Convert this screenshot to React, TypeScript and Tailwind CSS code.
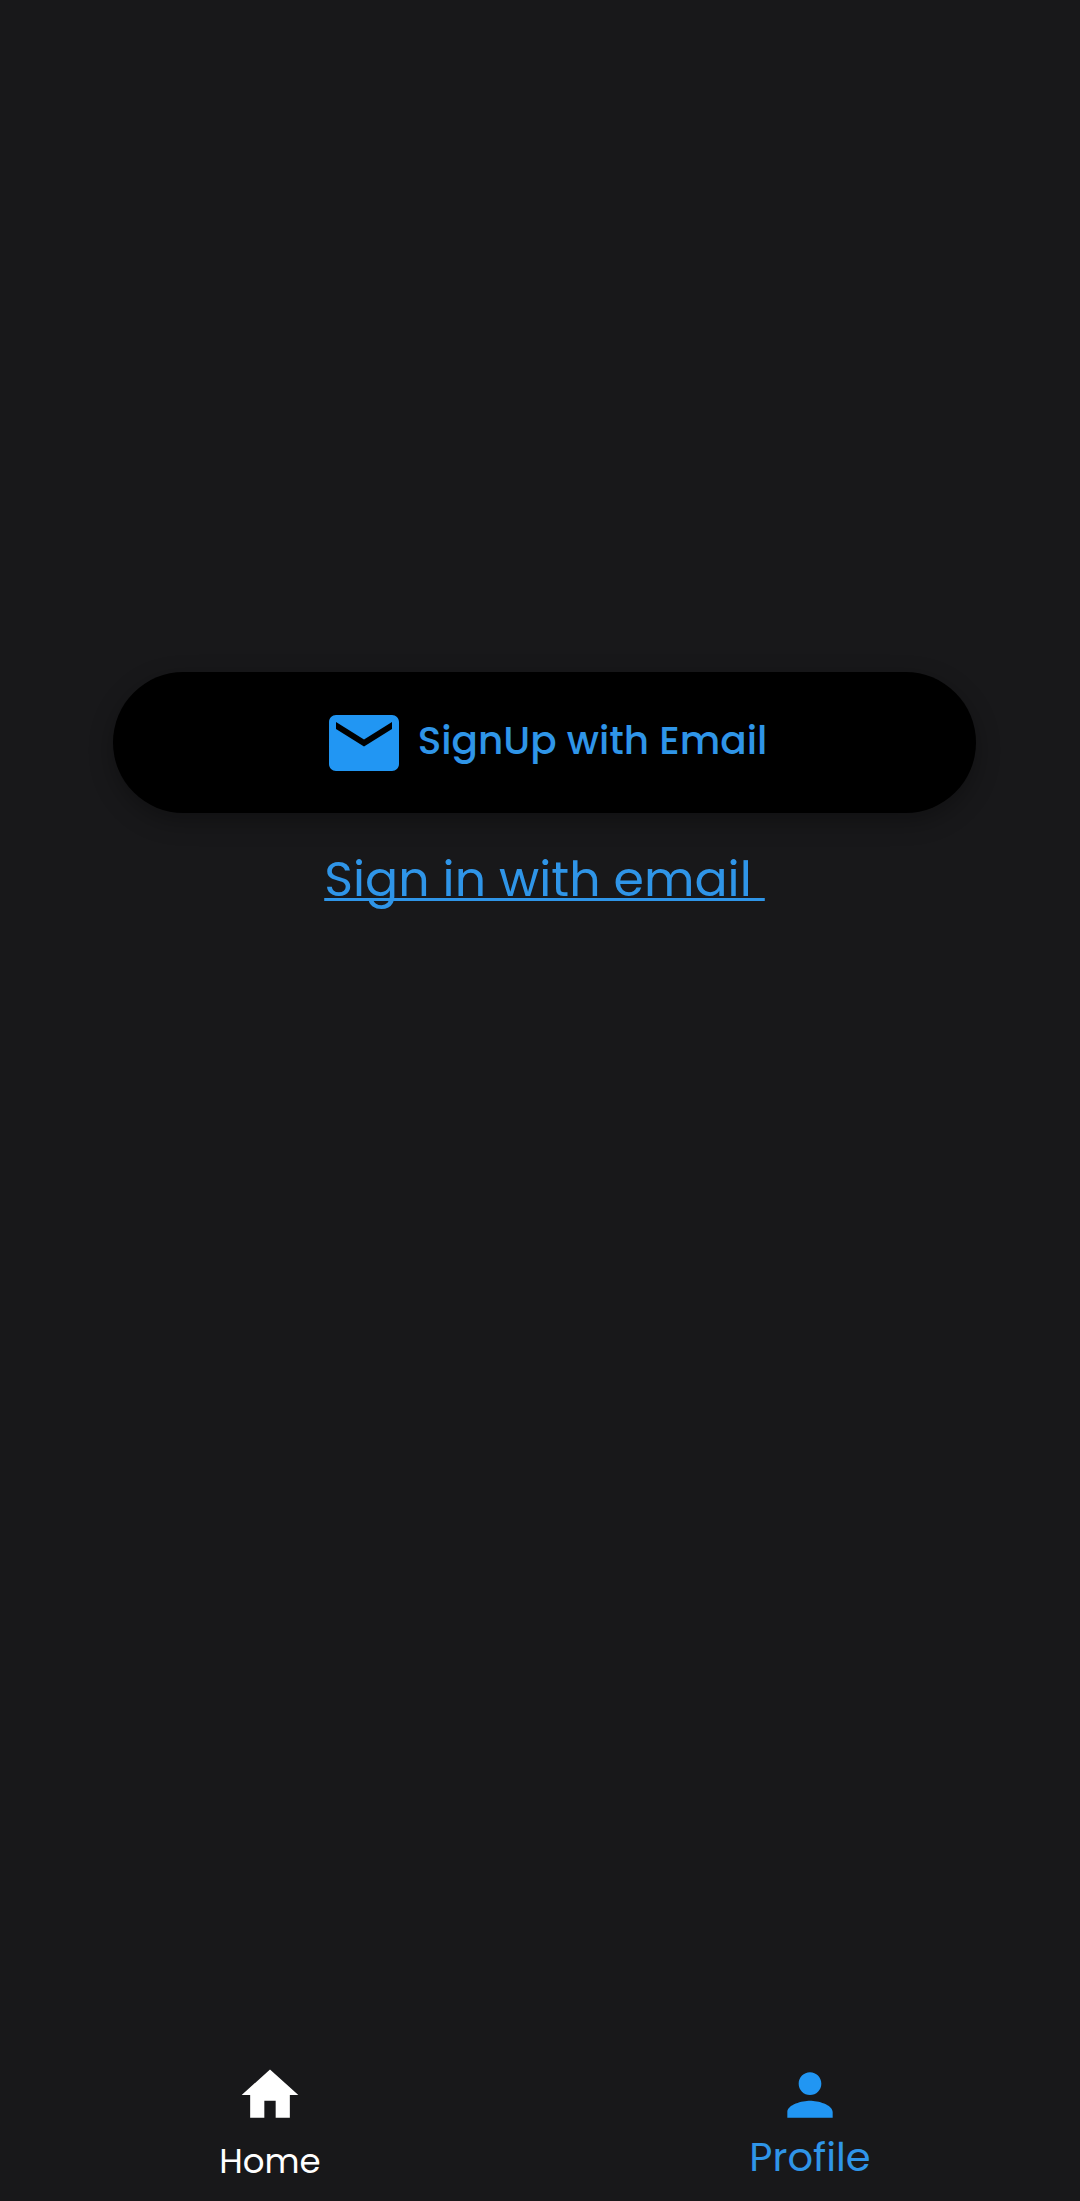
import { MdEmail, MdHome, MdPerson } from 'react-icons/md';

function App() {
  return (
    <div className="flex min-h-screen flex-col bg-[#18181a] font-['Poppins',Inter,sans-serif] text-[#2f95e8]">
      <main className="flex flex-1 flex-col items-center pt-[672px] pr-[104px] pl-[113px]">
        <button
          type="button"
          className="flex h-[141px] w-full items-center justify-center gap-3 rounded-full bg-black text-[39px] leading-[60px] font-medium shadow-[0_8px_24px_rgba(0,0,0,0.3)]"
        >
          <MdEmail className="size-[84px] shrink-0 text-[#2196f3]" aria-hidden="true" />
          <span className="pb-1">SignUp with Email</span>
        </button>
        <a
          href="#sign-in"
          className="mt-8 text-[49px] leading-[68px] font-normal whitespace-pre underline decoration-[3px] underline-offset-[2px] [text-decoration-skip-ink:none]"
        >
          {'Sign in with email '}
        </a>
      </main>
      <nav aria-label="Main" className="grid h-[140px] grid-cols-2">
        <a href="#home" className="flex flex-col items-center text-[34px] leading-[48px] text-white">
          <MdHome className="size-[68px]" aria-hidden="true" />
          <span className="mt-2">Home</span>
        </a>
        <a href="#profile" aria-current="page" className="flex flex-col items-center text-[40px] leading-[48px]">
          <MdPerson className="size-[68px] text-[#2196f3]" aria-hidden="true" />
          <span className="mt-1">Profile</span>
        </a>
      </nav>
    </div>
  );
}

export default App;
